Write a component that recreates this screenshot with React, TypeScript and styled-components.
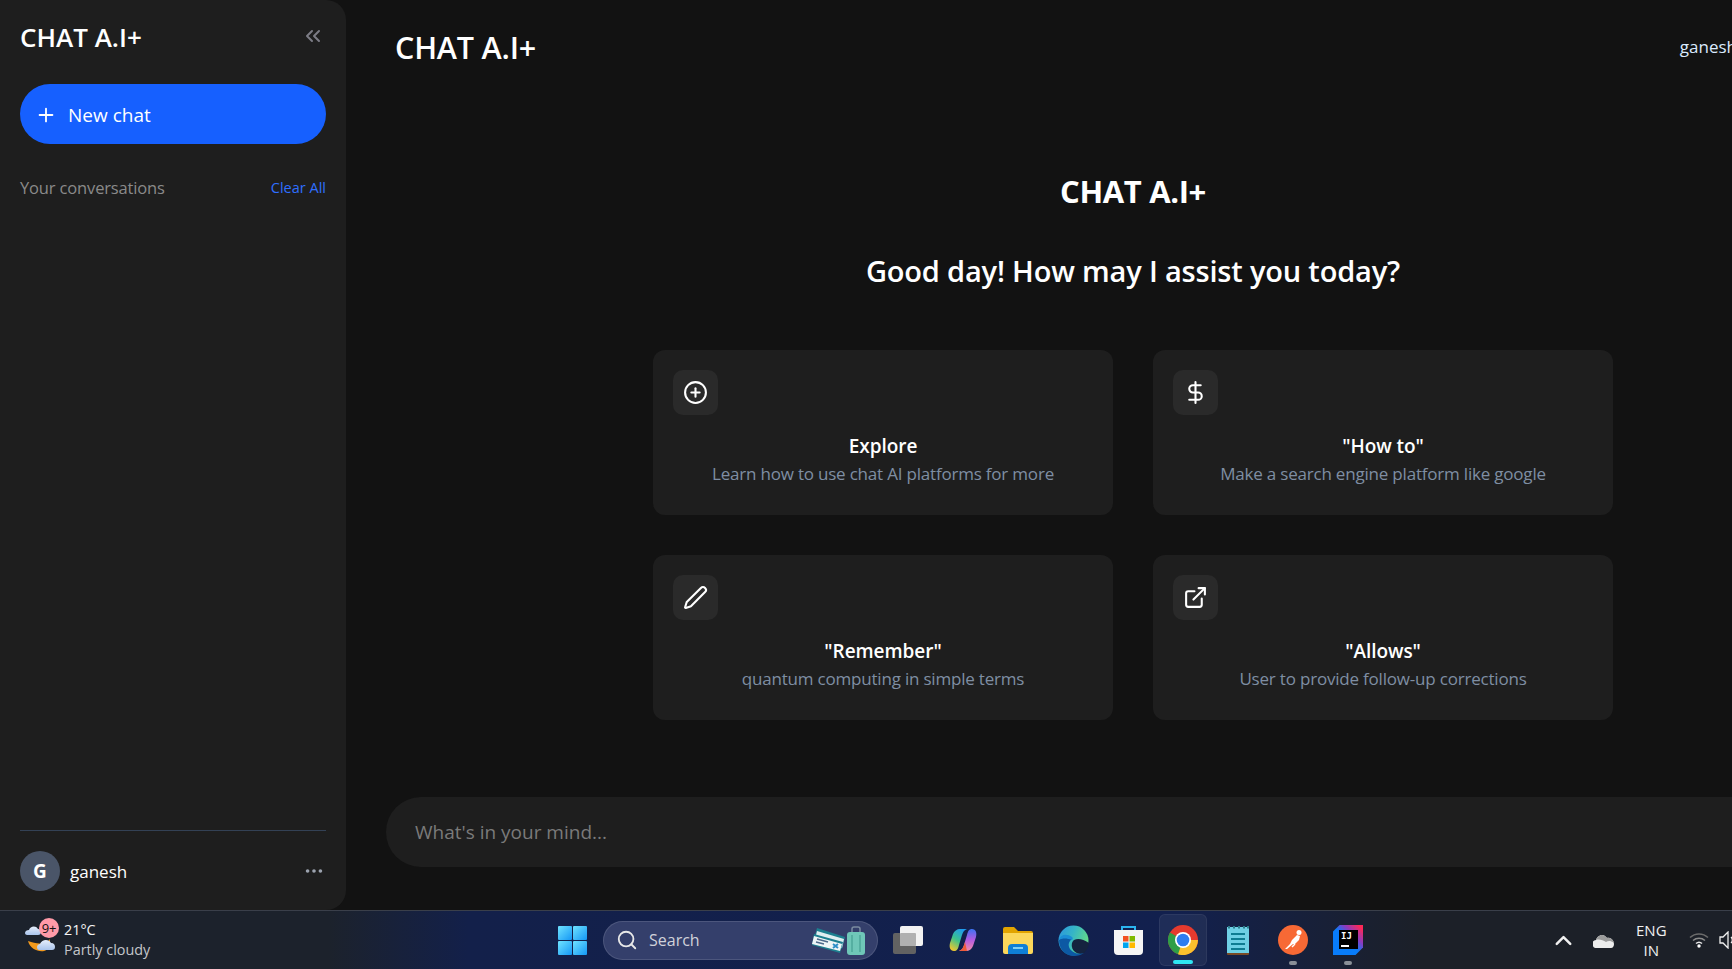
import React from 'react'
import styled, { createGlobalStyle } from 'styled-components'
import { ChevronUp, ChevronsLeft, CirclePlus, DollarSign, Ellipsis, ExternalLink, Pen, Plus, Search } from 'lucide-react'

const GlobalStyle = createGlobalStyle`
	html, body {
		margin: 0;
		height: 100%;
		overflow: hidden;
		background: #121212;
	}
	* {
		box-sizing: border-box;
	}
`

const prompts = [
	{ icon: <CirclePlus size={25} />, title: 'Explore', text: 'Learn how to use chat AI platforms for more' },
	{ icon: <DollarSign size={25} />, title: '"How to"', text: 'Make a search engine platform like google' },
	{ icon: <Pen size={25} />, title: '"Remember"', text: 'quantum computing in simple terms' },
	{ icon: <ExternalLink size={25} />, title: '"Allows"', text: 'User to provide follow-up corrections' },
]

const WeatherIcon = () => (
	<svg width='34' height='34' viewBox='0 0 34 34'>
		<defs>
			<linearGradient id='cloudFill' x1='0' y1='0' x2='0' y2='1'>
				<stop offset='0' stopColor='#e6eefb' />
				<stop offset='1' stopColor='#a9c4ec' />
			</linearGradient>
		</defs>
		<path d='M4 18c2 8 10 11 16 10 4-1 6-4 6-12-3 5-12 6-22 2z' fill='#f39a1d' />
		<path d='M1 10c0-2 2-3 4-3 1-4 7-5 9-1 2 0 3 1 3 3 0 2-1 3-3 3H3c-1 0-2-1-2-2z' fill='url(#cloudFill)' />
		<path d='M13 24c0-2 2-3 3-3 2-5 9-5 11-1 3 0 4 2 4 4 0 2-1 3-3 3H15c-1 0-2-1-2-3z' fill='url(#cloudFill)' />
	</svg>
)

const WindowsIcon = () => (
	<svg width='29' height='29' viewBox='0 0 29 29'>
		<defs>
			<linearGradient id='win' x1='0' y1='0' x2='1' y2='1'>
				<stop offset='0' stopColor='#6fe3ff' />
				<stop offset='1' stopColor='#1497f5' />
			</linearGradient>
		</defs>
		<rect x='0' y='0' width='14' height='14' rx='1' fill='url(#win)' />
		<rect x='15' y='0' width='14' height='14' rx='1' fill='url(#win)' />
		<rect x='0' y='15' width='14' height='14' rx='1' fill='url(#win)' />
		<rect x='15' y='15' width='14' height='14' rx='1' fill='url(#win)' />
	</svg>
)

const TaskViewIcon = () => (
	<svg width='30' height='28' viewBox='0 0 30 28'>
		<rect x='0' y='7' width='23' height='21' rx='2' fill='#626262' />
		<rect x='7' y='0' width='23' height='20' rx='2' fill='#f2f2f2' />
		<rect x='7' y='7' width='16' height='13' rx='1' fill='#b0b0b0' />
	</svg>
)

const CopilotIcon = () => (
	<svg width='28' height='24' viewBox='0 0 28 24'>
		<defs>
			<linearGradient id='copA' x1='0.7' y1='0' x2='0.2' y2='1'>
				<stop offset='0' stopColor='#1f9bf0' />
				<stop offset='0.5' stopColor='#3cc38c' />
				<stop offset='1' stopColor='#f4c62c' />
			</linearGradient>
			<linearGradient id='copB' x1='0.5' y1='0' x2='0.5' y2='1'>
				<stop offset='0' stopColor='#3a72f2' />
				<stop offset='0.5' stopColor='#b45be0' />
				<stop offset='1' stopColor='#f58ba6' />
			</linearGradient>
		</defs>
		<path d='M11 1h7c-3 1-4 3-5 6l-3 10c-1 4-2 6-5 6C1 23 0 19 1 15L4 6C5 3 8 1 11 1z' fill='url(#copA)' />
		<path d='M17 23h-7c3-1 4-3 5-6l3-10c1-4 2-6 5-6 4 0 5 4 4 8l-3 9c-1 3-4 5-7 5z' fill='url(#copB)' />
		<path d='M10 23c3-1 4-3 5-6l1-3 2 9z' fill='#ee5b3a' />
		<path d='M13 13l2-6 1 0-2 7z' fill='#15204a' />
	</svg>
)

const ExplorerIcon = () => (
	<svg width='30' height='27' viewBox='0 0 30 27'>
		<path d='M0 2a2 2 0 0 1 2-2h9l4 4h13a2 2 0 0 1 2 2v4H0z' fill='#e2a400' />
		<path d='M0 6h30v19a2 2 0 0 1-2 2H2a2 2 0 0 1-2-2z' fill='#fbd75b' />
		<path d='M5 21a4 4 0 0 1 4-4h12a4 4 0 0 1 4 4v6H5z' fill='#0f7fd6' />
		<rect x='10' y='20' width='10' height='2' fill='#7fd0f7' />
	</svg>
)

const EdgeIcon = () => (
	<svg width='31' height='31' viewBox='0 0 31 31'>
		<defs>
			<linearGradient id='edgeA' x1='0' y1='0' x2='1' y2='0.4'>
				<stop offset='0' stopColor='#2a94e0' />
				<stop offset='0.5' stopColor='#36b5c6' />
				<stop offset='1' stopColor='#62d98a' />
			</linearGradient>
		</defs>
		<circle cx='15.500' cy='15.500' r='15' fill='url(#edgeA)' />
		<path d='M16 15c4-2 9-1 15 3 0 3-2 7-5 10-3 2-7 1-10-2-3-3-3-9 0-11z' fill='#15233f' />
		<path d='M1 15c0 9 6 16 15 16 4 0 7-1 10-3-7 2-13-1-15-6-1-3 0-6 3-8-5-2-10-2-13 1z' fill='#0c59a4' />
		<path d='M1 15c1-5 7-7 13-3 1 1 1 2 0 3-5-2-10-2-13 0z' fill='#1b8ed6' />
	</svg>
)

const StoreIcon = () => (
	<svg width='29' height='30' viewBox='0 0 29 30'>
		<path d='M8 6V2h13v4' fill='none' stroke='#2bb5f0' strokeWidth='2' />
		<path d='M0 5h29v21a4 4 0 0 1-4 4H4a4 4 0 0 1-4-4z' fill='#f5f5f5' />
		<rect x='9' y='11' width='5.500' height='5.500' fill='#f25022' />
		<rect x='15.500' y='11' width='5.500' height='5.500' fill='#7fba00' />
		<rect x='9' y='17.500' width='5.500' height='5.500' fill='#00a4ef' />
		<rect x='15.500' y='17.500' width='5.500' height='5.500' fill='#ffb900' />
	</svg>
)

const ChromeIcon = () => (
	<svg width='30' height='30' viewBox='0 0 30 30'>
		<circle cx='15' cy='15' r='15' fill='#e53a2e' />
		<path d='M15 15 2 7.500A15 15 0 0 0 15 30z' fill='#2f9e46' />
		<path d='M15 15h15A15 15 0 0 1 10 29.200z' fill='#fbc02d' />
		<circle cx='15' cy='15' r='8' fill='#fff' />
		<circle cx='15' cy='15' r='6.300' fill='#2f7df0' />
	</svg>
)

const NotepadIcon = () => (
	<svg width='22' height='30' viewBox='0 0 22 30'>
		<rect x='0' y='2' width='22' height='28' rx='1' fill='#7a4a26' />
		<rect x='0' y='2' width='22' height='26' fill='#6fd0e5' />
		<path d='M2 1v2.500M7 1v2.500M12 1v2.500M17 1v2.500M21 1v2.500' stroke='#2c7d8c' strokeWidth='2' />
		<path d='M4 9h14M4 14h14M4 19h14M4 24h14' stroke='#0f7c92' strokeWidth='2' />
	</svg>
)

const PostmanIcon = () => (
	<svg width='30' height='30' viewBox='0 0 30 30'>
		<circle cx='15' cy='15' r='15' fill='#f76935' />
		<path d='M7 24l5-5 2-4 5-5 3 1-1 4-4 4-2 0-6 5z' fill='#fff' />
		<path d='M14 22l3-3' stroke='#fff' strokeWidth='1.500' />
		<circle cx='21' cy='7.500' r='2.500' fill='#fff' />
	</svg>
)

const TravelIcon = () => (
	<svg width='54' height='29' viewBox='0 0 54 29'>
		<path d='M40 7V3a2 2 0 0 1 2-2h4a2 2 0 0 1 2 2v4' fill='none' stroke='#7a8aa0' strokeWidth='1.500' />
		<rect x='35' y='6' width='18' height='23' rx='3' fill='#6fc7b8' />
		<path d='M40 9v17M48 9v17' stroke='#4ea899' strokeWidth='1.500' />
		<path d='M5 2 33 11 30 23 2 13z' fill='#1c7f8f' />
		<path d='M5 5 32 13 30 22 3 13z' fill='#dfeef0' />
		<path d='M2 8 31 16 28 27 0 19z' fill='#1c7f8f' />
		<path d='M2 10 30 18 28 25 0 18z' fill='#eef5f6' />
		<path d='M5 13l11 3M4 16l8 2' stroke='#4d6a8a' strokeWidth='1.500' />
		<path d='M21 18l5 4M26 18l-5 4' stroke='#2e8fc7' strokeWidth='2' />
	</svg>
)

const CloudIcon = () => (
	<svg width='21' height='15' viewBox='0 0 21 15'>
		<path d='M4 15a4 4 0 0 1-1-8c1-4 7-8 11-2 4-1 7 3 7 6 0 2-1 4-3 4z' fill='#ececec' />
		<path d='M3 7c1-4 7-8 11-2 3-1 6 1 7 5-4-3-6-2-8-1-3-2-7-3-10-2z' fill='#9c9c9c' />
	</svg>
)

const WifiIcon = () => (
	<svg width='20' height='16' viewBox='0 0 20 16' fill='none'>
		<path d='M1 5.500a13 13 0 0 1 18 0' stroke='#6b6b6b' strokeWidth='1.500' />
		<path d='M4 8.500a9 9 0 0 1 12 0' stroke='#8a8a8a' strokeWidth='1.500' />
		<path d='M7 11.500a4.500 4.500 0 0 1 6 0' stroke='#e8e8e8' strokeWidth='1.500' />
		<circle cx='10' cy='14' r='1.700' fill='#fff' />
	</svg>
)

const SpeakerIcon = () => (
	<svg width='20' height='18' viewBox='0 0 20 18' fill='none' stroke='#f0f0f0' strokeWidth='1.300'>
		<path d='M1 6h3l5-5v16l-5-5H1z' />
		<path d='M12 6a4 4 0 0 1 0 6' />
	</svg>
)

const App = () => {
	return (
		<>
			<GlobalStyle />
			<Page>
				<Workspace>
					<Sidebar>
						<SidebarHead>
							<SidebarTitle>CHAT A.I+</SidebarTitle>
							<CollapseButton>
								<ChevronsLeft size={24} />
							</CollapseButton>
						</SidebarHead>
						<NewChat>
							<Plus size={22} />
							New chat
						</NewChat>
						<ConversationsRow>
							<ConversationsLabel>Your conversations</ConversationsLabel>
							<ClearAll>Clear All</ClearAll>
						</ConversationsRow>
						<SidebarFoot>
							<Avatar>G</Avatar>
							<UserName>ganesh</UserName>
							<MoreButton>
								<Ellipsis size={22} />
							</MoreButton>
						</SidebarFoot>
					</Sidebar>
					<Main>
						<Header>
							<HeaderTitle>CHAT A.I+</HeaderTitle>
							<HeaderUser>ganesh</HeaderUser>
						</Header>
						<Welcome>
							<WelcomeTitle>CHAT A.I+</WelcomeTitle>
							<Greeting>Good day! How may I assist you today?</Greeting>
							<CardGrid>
								{prompts.map((p) => (
									<Card key={p.title}>
										<IconTile>{p.icon}</IconTile>
										<CardTitle>{p.title}</CardTitle>
										<CardText>{p.text}</CardText>
									</Card>
								))}
							</CardGrid>
						</Welcome>
						<PromptBar>What's in your mind...</PromptBar>
					</Main>
				</Workspace>
				<Taskbar>
					<WeatherWidget>
						<WeatherGlyph>
							<WeatherIcon />
							<Badge>9+</Badge>
						</WeatherGlyph>
						<WeatherText>
							<Temp>21°C</Temp>
							<Forecast>Partly cloudy</Forecast>
						</WeatherText>
					</WeatherWidget>
					<Dock>
						<DockSlot>
							<WindowsIcon />
						</DockSlot>
						<SearchBox>
							<Search size={22} color='#e8e8e8' />
							<SearchLabel>Search</SearchLabel>
							<TravelIcon />
						</SearchBox>
						<DockSlot>
							<TaskViewIcon />
						</DockSlot>
						<DockSlot>
							<CopilotIcon />
						</DockSlot>
						<DockSlot>
							<ExplorerIcon />
						</DockSlot>
						<DockSlot>
							<EdgeIcon />
						</DockSlot>
						<DockSlot>
							<StoreIcon />
						</DockSlot>
						<DockSlot $active>
							<ChromeIcon />
							<RunDot $active />
						</DockSlot>
						<DockSlot>
							<NotepadIcon />
						</DockSlot>
						<DockSlot>
							<PostmanIcon />
							<RunDot />
						</DockSlot>
						<DockSlot>
							<IntellijBox>
								<IntellijInner>IJ</IntellijInner>
							</IntellijBox>
							<RunDot />
						</DockSlot>
					</Dock>
					<Tray>
						<ChevronUp size={27} color='#f0f0f0' strokeWidth={2.2} />
						<TrayItem $left={16}>
							<CloudIcon />
						</TrayItem>
						<TrayItem $left={22}>
							<Language>
								<span>ENG</span>
								<span>IN</span>
							</Language>
						</TrayItem>
						<TrayItem $left={22}>
							<WifiIcon />
						</TrayItem>
						<TrayItem $left={10}>
							<SpeakerIcon />
						</TrayItem>
					</Tray>
				</Taskbar>
			</Page>
		</>
	)
}

export default App

const Page = styled.div`
	width: 1732px;
	height: 969px;
	display: flex;
	flex-direction: column;
	overflow: hidden;
	background: #121212;
	color: #fff;
	font-family: 'Open Sans', 'Noto Sans', sans-serif;
`

const Workspace = styled.div`
	flex: none;
	height: 910px;
	display: flex;
`

const Sidebar = styled.aside`
	flex: none;
	width: 346px;
	display: flex;
	flex-direction: column;
	padding: 19px 20px 19px;
	background: #1e1e1e;
	border-radius: 0 20px 20px 0;
`

const SidebarHead = styled.div`
	display: flex;
	align-items: center;
	justify-content: space-between;
	height: 36px;
	margin-bottom: 29px;
`

const SidebarTitle = styled.div`
	font-size: 26px;
	font-weight: 600;
`

const CollapseButton = styled.div`
	display: flex;
	color: #7c7c85;
	margin: -2px 1px 0 0;
`

const NewChat = styled.div`
	height: 60px;
	display: flex;
	align-items: center;
	gap: 11px;
	padding: 1px 0 0 15px;
	border-radius: 30px;
	background: #1660ff;
	font-size: 19px;
`

const ConversationsRow = styled.div`
	display: flex;
	align-items: center;
	justify-content: space-between;
	margin-top: 32px;
`

const ConversationsLabel = styled.span`
	font-size: 16.500px;
	letter-spacing: -0.15px;
	color: #8a8a8a;
`

const ClearAll = styled.span`
	font-size: 14.500px;
	color: #2f6fff;
`

const SidebarFoot = styled.div`
	margin-top: auto;
	display: flex;
	align-items: center;
	gap: 10px;
	padding-top: 20px;
	border-top: 1px solid #334155;
`

const Avatar = styled.div`
	width: 40px;
	height: 40px;
	display: flex;
	align-items: center;
	justify-content: center;
	border-radius: 50%;
	background: #4a5568;
	font-size: 19px;
	font-weight: 700;
`

const UserName = styled.span`
	font-size: 17px;
	padding-top: 1px;
`

const MoreButton = styled.div`
	margin-left: auto;
	display: flex;
	color: #9ca3af;
	margin-right: 1px;
`

const Main = styled.main`
	flex: none;
	width: 1574px;
	display: flex;
	flex-direction: column;
`

const Header = styled.header`
	height: 93px;
	display: flex;
	align-items: center;
	justify-content: space-between;
	padding: 0 183px 0 49px;
`

const HeaderTitle = styled.div`
	font-size: 30.500px;
	font-weight: 600;
	letter-spacing: -0.2px;
`

const HeaderUser = styled.div`
	font-size: 17px;
	color: #dbeafe;
`

const Welcome = styled.div`
	display: flex;
	flex-direction: column;
	align-items: center;
`

const WelcomeTitle = styled.h1`
	margin: 78px 0 0;
	font-size: 31px;
	font-weight: 700;
	letter-spacing: -0.35px;
	line-height: 40px;
`

const Greeting = styled.h2`
	margin: 39px 0 0;
	font-size: 29px;
	font-weight: 600;
	letter-spacing: -0.18px;
	line-height: 42px;
`

const CardGrid = styled.div`
	display: grid;
	grid-template-columns: 460px 460px;
	gap: 40px;
	margin-top: 58px;
`

const Card = styled.div`
	height: 165px;
	padding: 20px;
	border-radius: 12px;
	background: #1e1e1e;
	text-align: center;
`

const IconTile = styled.div`
	width: 45px;
	height: 45px;
	display: flex;
	align-items: center;
	justify-content: center;
	border-radius: 10px;
	background: #2a2a2a;
`

const CardTitle = styled.div`
	margin-top: 17px;
	font-size: 19px;
	font-weight: 600;
	letter-spacing: -0.05px;
	line-height: 28px;
`

const CardText = styled.div`
	font-size: 17px;
	letter-spacing: -0.2px;
	line-height: 27px;
	color: #7f8ea3;
`

const PromptBar = styled.div`
	height: 70px;
	margin: 77px 0 0 40px;
	display: flex;
	align-items: center;
	padding-left: 29px;
	border-radius: 35px;
	background: #1e1e1e;
	font-size: 19px;
	color: #7a7a7a;
`

const Taskbar = styled.footer`
	position: relative;
	flex: none;
	height: 59px;
	display: flex;
	align-items: center;
	border-top: 1px solid #3a3f4a;
	background: linear-gradient(90deg, #1c222c 0%, #1c222c 19%, #13204a 27%, #12204e 68%, #1c2028 82%, #1c2028 100%);
`

const WeatherWidget = styled.div`
	flex: none;
	width: 548px;
	display: flex;
	align-items: center;
	gap: 8px;
	padding-left: 24px;
`

const WeatherGlyph = styled.div`
	position: relative;
	width: 32px;
	height: 34px;
`

const Badge = styled.span`
	position: absolute;
	left: 15px;
	top: -5px;
	width: 20px;
	height: 20px;
	display: flex;
	align-items: center;
	justify-content: center;
	border-radius: 50%;
	background: #ff9aa8;
	color: #111;
	font-size: 13px;
	letter-spacing: -0.3px;
`

const WeatherText = styled.div`
	display: flex;
	flex-direction: column;
	font-size: 14.400px;
	line-height: 20px;
`

const Temp = styled.span`
	color: #f4f4f4;
`

const Forecast = styled.span`
	color: #c4c6ca;
`

const Dock = styled.div`
	display: flex;
	align-items: center;
`

const DockSlot = styled.div<{ $active?: boolean }>`
	position: relative;
	flex: none;
	width: 48px;
	height: 52px;
	margin-right: 7px;
	display: flex;
	align-items: center;
	justify-content: center;
	border-radius: 6px;
	${(p) => p.$active && 'background: rgba(255, 255, 255, 0.06); border: 1px solid rgba(255, 255, 255, 0.06);'}
`

const RunDot = styled.span<{ $active?: boolean }>`
	position: absolute;
	bottom: 1px;
	left: 50%;
	transform: translateX(-50%);
	width: ${(p) => (p.$active ? '20px' : '8px')};
	height: 4px;
	border-radius: 2px;
	background: ${(p) => (p.$active ? '#2ee6f2' : '#8a8f98')};
`

const SearchBox = styled.div`
	flex: none;
	width: 275px;
	height: 39px;
	margin: 0 6px 0 0;
	display: flex;
	align-items: center;
	gap: 11px;
	padding: 0 11px 0 12px;
	border-radius: 20px;
	border: 1px solid rgba(255, 255, 255, 0.12);
	background: #343f6b;
`

const SearchLabel = styled.span`
	flex: 1;
	font-size: 16px;
	color: #d0d2da;
`

const IntellijBox = styled.div`
	position: relative;
	width: 30px;
	height: 30px;
	clip-path: polygon(22% 0, 100% 0, 100% 75%, 75% 100%, 0 100%, 0 22%);
	background: linear-gradient(45deg, #087cfa 48%, #8a3bc0 68%, #fe2857 92%);
`

const IntellijInner = styled.div`
	position: absolute;
	left: 6px;
	top: 5px;
	width: 19px;
	height: 19px;
	background: #000;
	color: #fff;
	font-family: 'DejaVu Sans Mono', monospace;
	font-size: 9px;
	font-weight: 700;
	line-height: 10px;
	padding: 1px 0 0 2px;
	&::after {
		content: '';
		position: absolute;
		left: 2px;
		bottom: 2px;
		width: 8px;
		height: 2px;
		background: #fff;
	}
`

const Tray = styled.div`
	position: absolute;
	left: 1550px;
	top: 0;
	height: 100%;
	display: flex;
	align-items: center;
`

const TrayItem = styled.div<{ $left: number }>`
	display: flex;
	margin-left: ${(p) => p.$left}px;
`

const Language = styled.div`
	display: flex;
	flex-direction: column;
	align-items: center;
	font-size: 15px;
	line-height: 20px;
	color: #f0f0f0;
`
